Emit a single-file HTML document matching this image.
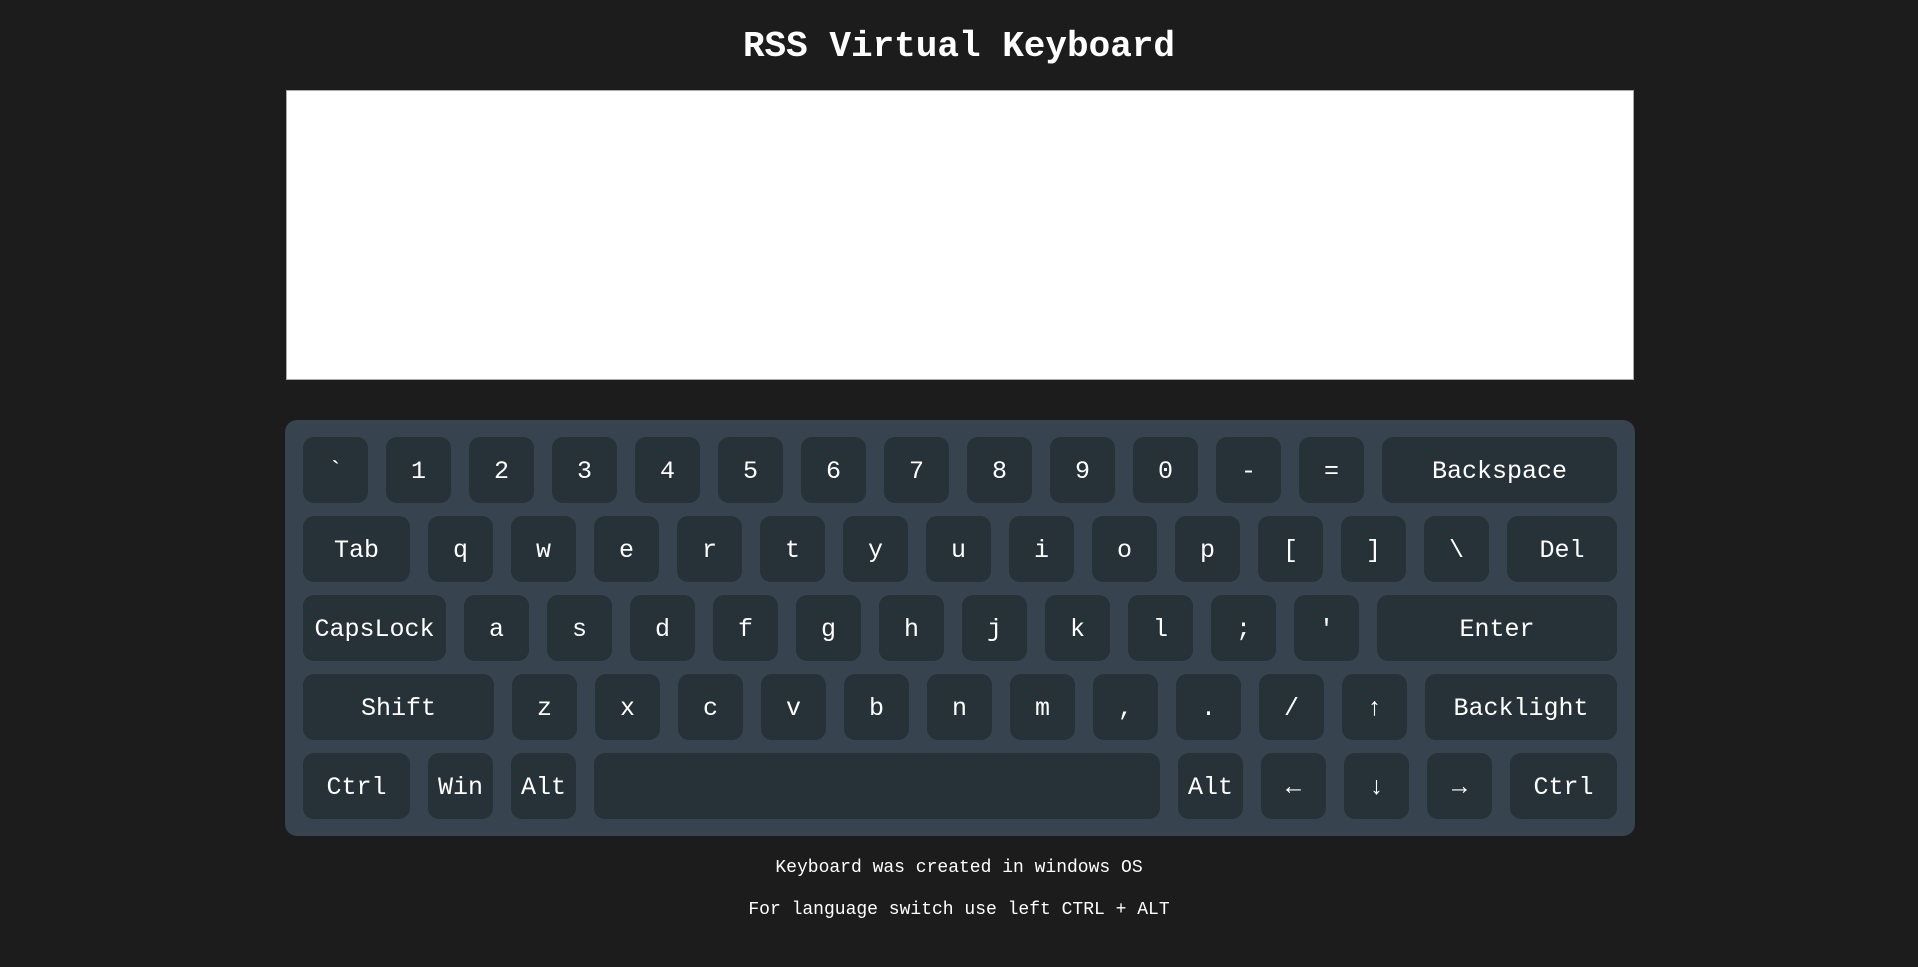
<!DOCTYPE html>
<html><head><meta charset="utf-8"><style>
*{box-sizing:border-box;margin:0;padding:0}
body{width:1918px;height:967px;background:#1c1c1c;font-family:"Liberation Mono",monospace;color:#fff;position:relative;overflow:hidden}
h1{position:absolute;top:26px;left:0;width:100%;text-align:center;font-size:36px;font-weight:bold;letter-spacing:0px}
.ta{position:absolute;left:286px;top:90px;width:1348px;height:290px;background:#fff;border:1px solid #aaa}
.kb{position:absolute;left:285px;top:420px;width:1350px;height:416px;background:#37444f;border-radius:12px;padding:17px 18px}
.row{display:flex;gap:18px;height:66px;margin-bottom:13px}
.k{width:65px;height:66px;background:#263238;border-radius:11px;display:flex;align-items:center;justify-content:center;font-size:25px;flex:none;padding-top:2px}
.g{flex:1}
.f{position:absolute;left:0;width:100%;text-align:center;font-size:18px}
</style></head><body>
<h1>RSS Virtual Keyboard</h1>
<div class="ta"></div>
<div class="kb">
<div class="row"><div class="k">`</div><div class="k">1</div><div class="k">2</div><div class="k">3</div><div class="k">4</div><div class="k">5</div><div class="k">6</div><div class="k">7</div><div class="k">8</div><div class="k">9</div><div class="k">0</div><div class="k">-</div><div class="k">=</div><div class="k g">Backspace</div></div>
<div class="row"><div class="k" style="width:107px">Tab</div><div class="k">q</div><div class="k">w</div><div class="k">e</div><div class="k">r</div><div class="k">t</div><div class="k">y</div><div class="k">u</div><div class="k">i</div><div class="k">o</div><div class="k">p</div><div class="k">[</div><div class="k">]</div><div class="k">\</div><div class="k g">Del</div></div>
<div class="row"><div class="k" style="width:143px">CapsLock</div><div class="k">a</div><div class="k">s</div><div class="k">d</div><div class="k">f</div><div class="k">g</div><div class="k">h</div><div class="k">j</div><div class="k">k</div><div class="k">l</div><div class="k">;</div><div class="k">'</div><div class="k g">Enter</div></div>
<div class="row"><div class="k" style="width:191px">Shift</div><div class="k">z</div><div class="k">x</div><div class="k">c</div><div class="k">v</div><div class="k">b</div><div class="k">n</div><div class="k">m</div><div class="k">,</div><div class="k">.</div><div class="k">/</div><div class="k">↑</div><div class="k g">Backlight</div></div>
<div class="row"><div class="k" style="width:107px">Ctrl</div><div class="k">Win</div><div class="k">Alt</div><div class="k" style="width:566px"></div><div class="k">Alt</div><div class="k">←</div><div class="k">↓</div><div class="k">→</div><div class="k g">Ctrl</div></div>
</div>
<div class="f" style="top:858px">Keyboard was created in windows OS</div>
<div class="f" style="top:900px">For language switch use left CTRL + ALT</div>
</body></html>
